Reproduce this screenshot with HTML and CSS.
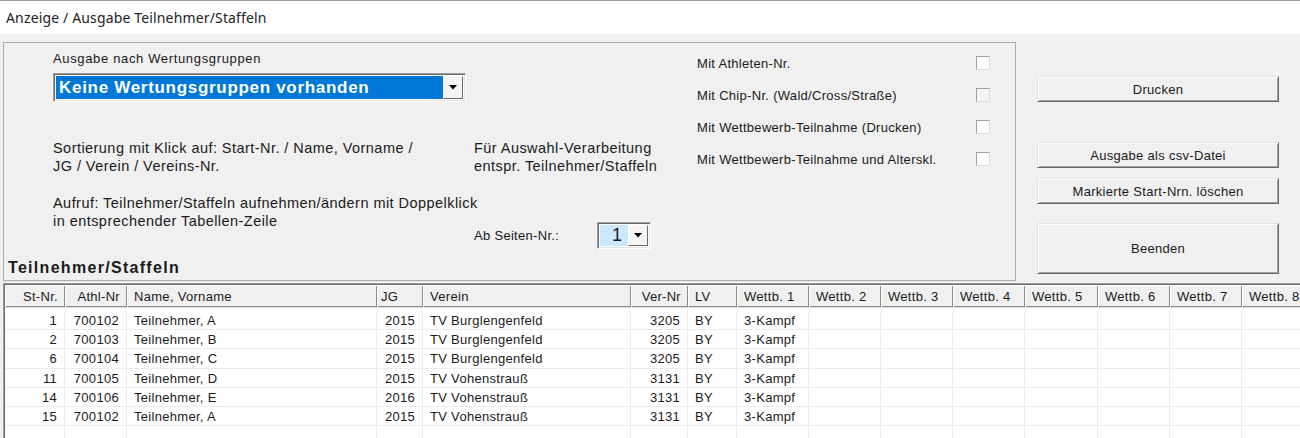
FILE: index.html
```html
<!DOCTYPE html>
<html lang="de">
<head>
  <meta charset="UTF-8" />
  <title>Anzeige / Ausgabe Teilnehmer/Staffeln</title>
  <link rel="stylesheet" href="styles.css">
</head>
<body>

  <div class="titlebar">Anzeige / Ausgabe Teilnehmer/Staffeln</div>

  <div class="top">
    <div class="group">
      <div class="group-body">
        <div class="col-left">
          <div class="caption">Ausgabe nach Wertungsgruppen</div>
          <div class="combo combo-wide">
            <span class="combo-value">Keine Wertungsgruppen vorhanden</span>
            <span class="combo-btn">
              <svg width="8" height="5" viewBox="0 0 8 5"><path d="M0 0h8L4 4.5z" fill="#000"/></svg>
            </span>
          </div>
          <p class="hint">Sortierung mit Klick auf: Start-Nr. / Name, Vorname /<br>JG / Verein / Vereins-Nr.</p>
          <p class="hint">Aufruf: Teilnehmer/Staffeln aufnehmen/ändern mit Doppelklick<br>in entsprechender Tabellen-Zeile</p>
        </div>

        <div class="col-mid">
          <p class="hint">Für Auswahl-Verarbeitung<br>entspr. Teilnehmer/Staffeln</p>
          <div class="page-row">
            <span class="page-label">Ab Seiten-Nr.:</span>
            <div class="combo combo-small">
              <span class="combo-value">1</span>
              <span class="combo-btn">
                <svg width="8" height="5" viewBox="0 0 8 5"><path d="M0 0h8L4 4.5z" fill="#000"/></svg>
              </span>
            </div>
          </div>
        </div>

        <div class="col-opts">
          <label class="opt"><span>Mit Athleten-Nr.</span><span class="check"></span></label>
          <label class="opt"><span>Mit Chip-Nr. (Wald/Cross/Straße)</span><span class="check disabled"></span></label>
          <label class="opt"><span>Mit Wettbewerb-Teilnahme (Drucken)</span><span class="check"></span></label>
          <label class="opt"><span>Mit Wettbewerb-Teilnahme und Alterskl.</span><span class="check"></span></label>
        </div>
      </div>
      <div class="group-title">Teilnehmer/Staffeln</div>
    </div>

    <div class="buttons">
      <button class="btn">Drucken</button>
      <button class="btn btn-csv">Ausgabe als csv-Datei</button>
      <button class="btn btn-del">Markierte Start-Nrn. löschen</button>
      <button class="btn btn-end">Beenden</button>
    </div>
  </div>

  <div class="grid-wrap">
    <table class="grid">
      <colgroup>
        <col style="width:60px"><col style="width:62px"><col style="width:250px"><col style="width:46px">
        <col style="width:208px"><col style="width:57px"><col style="width:49px">
        <col style="width:72px"><col style="width:72px"><col style="width:72px"><col style="width:72px">
        <col style="width:73px"><col style="width:72px"><col style="width:72px"><col style="width:72px">
      </colgroup>
      <thead>
        <tr>
          <th class="r">St-Nr.</th>
          <th class="r">Athl-Nr</th>
          <th>Name, Vorname</th>
          <th class="jg">JG</th>
          <th>Verein</th>
          <th class="r">Ver-Nr</th>
          <th>LV</th>
          <th>Wettb. 1</th>
          <th>Wettb. 2</th>
          <th>Wettb. 3</th>
          <th>Wettb. 4</th>
          <th>Wettb. 5</th>
          <th>Wettb. 6</th>
          <th>Wettb. 7</th>
          <th>Wettb. 8</th>
        </tr>
      </thead>
      <tbody id="rows"></tbody>
    </table>
  </div>

  <script>
    const starters = [
      { st: 1,  athl: 700102, name: "Teilnehmer, A", jg: 2015, verein: "TV Burglengenfeld", nr: 3205, lv: "BY", w1: "3-Kampf" },
      { st: 2,  athl: 700103, name: "Teilnehmer, B", jg: 2015, verein: "TV Burglengenfeld", nr: 3205, lv: "BY", w1: "3-Kampf" },
      { st: 6,  athl: 700104, name: "Teilnehmer, C", jg: 2015, verein: "TV Burglengenfeld", nr: 3205, lv: "BY", w1: "3-Kampf" },
      { st: 11, athl: 700105, name: "Teilnehmer, D", jg: 2015, verein: "TV Vohenstrauß", nr: 3131, lv: "BY", w1: "3-Kampf" },
      { st: 14, athl: 700106, name: "Teilnehmer, E", jg: 2016, verein: "TV Vohenstrauß", nr: 3131, lv: "BY", w1: "3-Kampf" },
      { st: 15, athl: 700102, name: "Teilnehmer, A", jg: 2015, verein: "TV Vohenstrauß", nr: 3131, lv: "BY", w1: "3-Kampf" },
    ];

    function renderRows(items) {
      const body = document.getElementById('rows');
      let html = '';
      items.forEach(s => {
        html += `
          <tr>
            <td class="r">${s.st}</td>
            <td class="r">${s.athl}</td>
            <td>${s.name}</td>
            <td class="r">${s.jg}</td>
            <td>${s.verein}</td>
            <td class="r">${s.nr}</td>
            <td>${s.lv}</td>
            <td>${s.w1}</td>
            <td></td><td></td><td></td><td></td><td></td><td></td><td></td>
          </tr>`;
      });
      html += '<tr>' + '<td></td>'.repeat(15) + '</tr>';
      body.innerHTML = html;
    }

    renderRows(starters);
  </script>

</body>
</html>
```

FILE: styles.css
```css
body {
  margin: 0;
  background: #f0f0f0;
  font-family: "Liberation Sans", Arial, sans-serif;
  font-size: 13px;
  letter-spacing: 0.3px;
  color: #1a1a1a;
  overflow: hidden;
}
.titlebar {
  height: 33px;
  border-top: 1px solid #9a9a9a;
  background: #fff;
  padding-left: 6px;
  font-family: "Noto Sans", sans-serif;
  font-size: 14px;
  letter-spacing: 0.15px;
  line-height: 33px;
  color: #222;
}

/* upper part: group box + buttons */
.top {
  display: flex;
  align-items: flex-start;
}
.group {
  margin: 8px 0 0 3px;
  width: 1011px;
  height: 237px;
  border: 1px solid #acacac;
  display: flex;
  flex-direction: column;
}
.group-body {
  display: flex;
  height: 216px;
  padding-left: 49px;
}
.col-left {
  width: 421px;
  padding-top: 8px;
}
.col-mid {
  width: 223px;
}
.col-opts {
  width: 294px;
  padding-top: 4px;
}
.caption {
  line-height: 16px;
  letter-spacing: 0.65px;
}
.hint {
  margin: 37px 0 0;
  font-size: 14.5px;
  letter-spacing: 0.45px;
  line-height: 18px;
  white-space: nowrap;
}
.hint + .hint {
  margin-top: 19px;
}
.col-mid .hint {
  margin-top: 96px;
}
.page-row {
  display: flex;
  align-items: center;
  margin-top: 47px;
}
.page-label {
  width: 123px;
}

/* combo boxes */
.combo {
  display: flex;
  box-sizing: border-box;
  border: 1px solid;
  border-color: #a0a0a0 #fff #fff #a0a0a0;
  box-shadow: inset 1px 1px 0 #696969, inset -1px -1px 0 #e3e3e3;
  background: #fff;
  padding: 2px;
}
.combo-wide {
  margin-top: 6px;
  width: 413px;
  height: 29px;
}
.combo-wide .combo-value {
  flex: 1;
  background: #0078d7;
  color: #fff;
  font-weight: bold;
  font-size: 17px;
  letter-spacing: 0.7px;
  line-height: 23px;
  padding-left: 3px;
}
.combo-small {
  width: 54px;
  height: 27px;
}
.combo-small .combo-value {
  flex: 1;
  background: #cce8ff;
  font-size: 18px;
  line-height: 21px;
  padding-left: 12px;
}
.combo-btn {
  width: 18px;
  display: flex;
  align-items: center;
  justify-content: center;
  background: #f4f4f4;
  border: 1px solid;
  border-color: #fff #696969 #696969 #fff;
}

/* option checkboxes */
.opt {
  display: flex;
  align-items: center;
  justify-content: space-between;
  height: 32px;
}
.check {
  width: 12px;
  height: 12px;
  border: 1px solid;
  border-color: #a0a0a0 #dcdcdc #dcdcdc #a0a0a0;
  background: #fff;
  margin-right: 1px;
}
.check.disabled {
  background: #f4f4f4;
}
.group-title {
  padding-left: 4px;
  font-size: 16px;
  font-weight: bold;
  letter-spacing: 1.3px;
  line-height: 18px;
}

/* buttons */
.buttons {
  display: flex;
  flex-direction: column;
  margin: 42px 0 0 21px;
  width: 242px;
}
.btn {
  height: 26px;
  padding: 0;
  font-family: inherit;
  font-size: 13px;
  letter-spacing: 0.3px;
  color: #1a1a1a;
  background: #f0f0f0;
  border: 1px solid;
  border-color: #e3e3e3 #696969 #696969 #e3e3e3;
  box-shadow: inset 1px 1px 0 #fff, inset -1px -1px 0 #a0a0a0;
}
.btn-csv {
  margin-top: 40px;
}
.btn-del {
  margin-top: 10px;
}
.btn-end {
  margin-top: 19px;
  height: 51px;
}

/* participant grid */
.grid-wrap {
  margin: 2px 0 0 3px;
  height: 160px;
  overflow: hidden;
  border-top: 1px solid #a0a0a0;
  border-left: 1px solid #a0a0a0;
  box-shadow: inset 1px 1px 0 #696969;
  padding: 1px 0 0 1px;
  background: #fff;
}
.grid {
  table-layout: fixed;
  width: 1309px;
  border-collapse: separate;
  border-spacing: 0;
}
.grid th {
  height: 22px;
  padding: 0 7px;
  font-weight: normal;
  text-align: left;
  white-space: nowrap;
  background: #f0f0f0;
  border-bottom: 1px solid #dcdcdc;
  box-shadow: inset 1px 1px 0 #fff, inset -1px -1px 0 #8c8c8c;
}
.grid th.jg {
  padding-left: 4px;
}
.grid td {
  height: 16.2px;
  padding: 2px 7px 0;
  line-height: 16px;
  white-space: nowrap;
  border-right: 1px solid #ececec;
  border-bottom: 1px solid #ececec;
}
.grid tbody tr:first-child td {
  border-top: 3px solid #fff;
}
.grid .r {
  text-align: right;
}
```
